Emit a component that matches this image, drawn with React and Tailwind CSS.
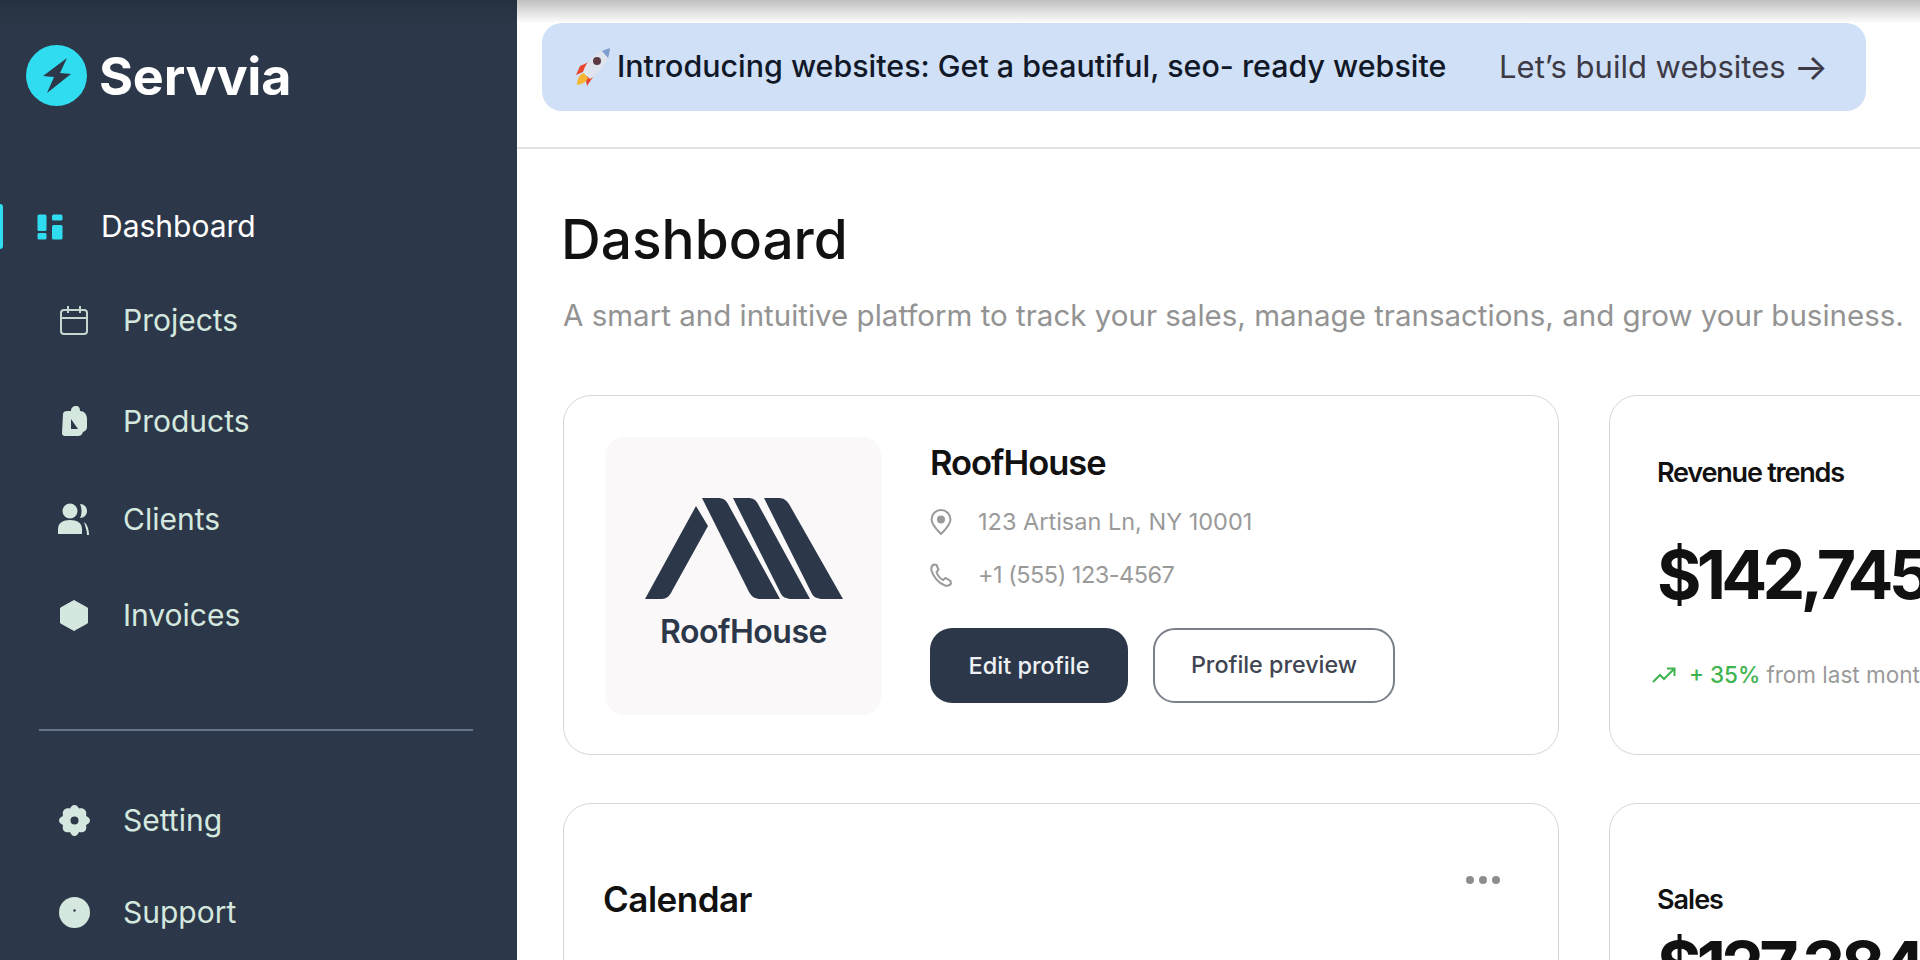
import React from "react";

const navIcon = "#d5e8df";

function Rocket() {
  return (
    <svg width="36" height="40" viewBox="0 0 36 40">
      <path d="M10 24 L1 28 L5 19 L14 15Z" fill="#e8452c" />
      <path d="M18 30 L12 39 L10 29Z" fill="#e8452c" />
      <path d="M2 38 C2 31 5 27 9 26 L13 31 C11 35 8 37 2 38Z" fill="#f7b733" />
      <path d="M8 25 C11 14 21 5 35 1 C34 14 26 25 15 32Z" fill="#dfe5ee" />
      <path d="M27 4 C29 3 32 2 35 1 C35 4 34 8 33 11Z" fill="#7f9fd0" />
      <circle cx="22" cy="14" r="4" fill="#5a3a44" />
    </svg>
  );
}

function Bolt() {
  return (
    <svg width="61" height="61" viewBox="0 0 61 61">
      <circle cx="30.5" cy="30.5" r="30.5" fill="#2fdcf0" />
      <path d="M41 13 L17 31 L28 32 L21 48 L45 29 L34 28Z" fill="#2c3849" />
    </svg>
  );
}

function DashIcon() {
  return (
    <svg width="26" height="26" viewBox="0 0 26 26" fill="#2fdcf0">
      <rect x="0.5" y="0.5" width="9" height="16.5" rx="1.5" />
      <rect x="0.5" y="19" width="9" height="6.5" rx="1.5" />
      <rect x="15" y="0.5" width="10.5" height="6" rx="1.5" />
      <rect x="15" y="11" width="10.5" height="14.5" rx="1.5" />
    </svg>
  );
}

function CalIcon() {
  return (
    <svg width="28" height="30" viewBox="0 0 28 30" fill="none" stroke="#c4d8cf" strokeWidth="2">
      <rect x="1" y="5" width="26" height="24" rx="3" />
      <path d="M1 13h26M8 1v7M20 1v7" />
    </svg>
  );
}

function ProductIcon() {
  return (
    <svg width="28" height="32" viewBox="0 0 28 32">
      <path
        d="M3 9 C3 7 5 6 7 6 L11 6 C11 3 13 1 16 1 C19 1 20 3 20 6 C24 6 27 9 27 14 L27 22 C27 25 25 26 23 27 C22 30 20 31 18 31 L5 31 C3 31 2 30 2 28Z"
        fill={navIcon}
      />
      <path d="M11 14 L18 24 L11 24Z" fill="#2c3849" />
    </svg>
  );
}

function ClientsIcon() {
  return (
    <svg width="32" height="32" viewBox="0 0 32 32" fill={navIcon}>
      <circle cx="12" cy="8" r="7.5" />
      <path d="M22 1 C27 1 29 5 29 8 C29 12 26 15 22 15 C24 11 24 5 22 1Z" />
      <path d="M0 31 L0 26 C0 20 5 17 12 17 C19 17 24 20 24 26 L24 31Z" />
      <path d="M26 19 C29 21 31 26 31 32 L29 32 C29 27 27 23 26 19Z" />
    </svg>
  );
}

function HexIcon() {
  return (
    <svg width="28" height="31" viewBox="0 0 28 31" fill={navIcon}>
      <path d="M14 0.5 L27.5 8 L27.5 23 L14 30.5 L0.5 23 L0.5 8Z" stroke={navIcon} strokeLinejoin="round" />
    </svg>
  );
}

function GearIcon() {
  return (
    <svg width="31" height="31" viewBox="0 0 31 31">
      <path
        d="M15.5 0 C18 0 19 2 20 3.5 C22 3 24.5 3 26 5 C27.5 6.5 27.5 9 27 11 C29 12 31 13 31 15.5 C31 18 29 19 27 20 C27.5 22 27.5 24.5 26 26 C24.5 27.5 22 27.5 20 27 C19 29 18 31 15.5 31 C13 31 12 29 11 27 C9 27.5 6.5 27.5 5 26 C3.5 24.5 3.5 22 4 20 C2 19 0 18 0 15.5 C0 13 2 12 4 11 C3.5 9 3.5 6.5 5 5 C6.5 3 9 3 11 3.5 C12 2 13 0 15.5 0Z"
        fill={navIcon}
      />
      <circle cx="15.5" cy="15.5" r="4" fill="#2c3849" />
    </svg>
  );
}

function SupportIcon() {
  return (
    <svg width="31" height="31" viewBox="0 0 31 31">
      <circle cx="15.5" cy="15.5" r="15.5" fill={navIcon} />
      <circle cx="15.5" cy="13.5" r="1.2" fill="#2c3849" />
    </svg>
  );
}

function RoofLogo() {
  return (
    <svg width="198" height="102" viewBox="0 0 198 102" fill="#2c3849">
      <path d="M51 8 L63 28 L27 93 C25 98 21 101 17 101 L0 101Z" />
      <path d="M57 0 L73 0 C78 0 81 2 83 6 L135 101 L116 101 C110 101 107 99 104 94Z" />
      <path d="M88 0 L103 0 C108 0 111 2 113 6 L165 101 L147 101 C141 101 137 99 135 94Z" />
      <path d="M119 0 L134 0 C139 0 142 3 144 6 L198 101 L178 101 C172 101 168 99 166 94Z" />
    </svg>
  );
}

function NavRow({ icon, label, className }) {
  return (
    <div className={"flex h-[40px] items-center pl-[58px] text-[30px] text-[#d5e8df] " + className}>
      <div className="flex w-[32px] justify-center">{icon}</div>
      <span className="ml-[33px]">{label}</span>
    </div>
  );
}

export default function App() {
  return (
    <div className="flex h-[960px] w-full overflow-hidden bg-white [font-family:Inter,sans-serif]">
      {/* SIDEBAR */}
      <aside className="w-[517px] shrink-0 bg-gradient-to-b from-[#263140] from-0% to-[#2c3849] to-[3%]">
        <div className="flex items-center pl-[26px] pt-[44px]">
          <Bolt />
          <span className="ml-[12px] pt-[2px] text-[52px] font-bold leading-[61px] tracking-[-0.2px] text-white">Servvia</span>
        </div>

        <div className="mt-[97px] flex h-[45px] items-center">
          <div className="h-[45px] w-[3px] rounded-r bg-[#2fdcf0]" />
          <div className="ml-[34px]"><DashIcon /></div>
          <span className="ml-[38px] text-[30px] text-white">Dashboard</span>
        </div>

        <NavRow icon={<CalIcon />} label="Projects" className="mt-[51px]" />
        <NavRow icon={<ProductIcon />} label="Products" className="mt-[61px]" />
        <NavRow icon={<ClientsIcon />} label="Clients" className="mt-[58px]" />
        <NavRow icon={<HexIcon />} label="Invoices" className="mt-[56px]" />

        <div className="ml-[39px] mt-[94px] h-[2px] w-[434px] bg-[#64748b]" />

        <NavRow icon={<GearIcon />} label="Setting" className="mt-[69px]" />
        <NavRow icon={<SupportIcon />} label="Support" className="mt-[52px]" />
      </aside>

      {/* MAIN */}
      <main className="min-w-0 flex-1 overflow-hidden">
        <div className="h-[149px] border-b-2 border-[#e2e2e2] bg-gradient-to-b from-[#c0c0c0] to-white to-[16%] pl-[25px] pr-[54px] pt-[23px]">
          <div className="flex h-[88px] items-center justify-between rounded-[20px] bg-[#cfe0f7] pl-[33px] pr-[38px]">
            <div className="flex items-center gap-[6px]">
              <Rocket />
              <span className="text-[30.4px] font-medium text-[#111827]">Introducing websites: Get a beautiful, seo- ready website</span>
            </div>
            <span className="flex items-center text-[31px] text-[#3d3a45]">
              Let’s build websites
              <span className="ml-[8px] text-[36px] leading-[40px]">→</span>
            </span>
          </div>
        </div>

        <div className="pl-[46px]">
          <h1 className="ml-[-2px] mt-[57px] text-[55px] font-medium leading-[66px] text-[#111]">Dashboard</h1>
          <p className="mt-[25px] whitespace-nowrap text-[29.5px] leading-[36px] text-[#939393]">
            A smart and intuitive platform to track your sales, manage transactions, and grow your business.
          </p>

          <div className="mt-[62px] flex gap-[50px]">
            {/* PROFILE CARD */}
            <div className="flex h-[360px] w-[996px] shrink-0 rounded-[28px] border border-[#d6d6d6] p-[41px]">
              <div className="flex h-[278px] w-[277px] flex-col items-center rounded-[20px] bg-[#faf8f9] pt-[61px]">
                <RoofLogo />
                <span className="mt-[14px] text-[32px] font-semibold leading-[36px] tracking-[-0.5px] text-[#2c3849]">RoofHouse</span>
              </div>
              <div className="ml-[48px] flex flex-col">
                <h2 className="mt-[6px] text-[34.5px] font-semibold leading-[40px] tracking-[-1px] text-[#111]">RoofHouse</h2>
                <div className="mt-[24px] flex items-center text-[23.5px] leading-[30px] text-[#9a9a9a]">
                  <svg width="22" height="26" viewBox="0 0 22 26" fill="none" stroke="#9a9a9a" strokeWidth="2">
                    <path d="M11 25 C6 20 1.5 15 1.5 10.5 A9.5 9.5 0 0 1 20.5 10.5 C20.5 15 16 20 11 25Z" />
                    <circle cx="11" cy="10.5" r="4" fill="#9a9a9a" stroke="none" />
                  </svg>
                  <span className="ml-[26px]">123 Artisan Ln, NY 10001</span>
                </div>
                <div className="mt-[23px] flex items-center text-[23.5px] leading-[30px] tracking-[-0.5px] text-[#9a9a9a]">
                  <svg width="22" height="24" viewBox="0 0 22 24" fill="none" stroke="#9a9a9a" strokeWidth="2">
                    <path d="M4 1.5 C1.5 2.5 1 5 1.5 7.5 C3 13 8 20 15 22.5 C17.5 23 20 22.5 21 20.5 L20.5 18 L15.5 15 L13 17 C10 15.5 7.5 12 6.5 9 L8.5 6.5 L6.5 2Z" />
                  </svg>
                  <span className="ml-[26px]">+1 (555) 123-4567</span>
                </div>
                <div className="mt-[38px] flex gap-[25px]">
                  <button className="flex h-[75px] w-[198px] items-center justify-center rounded-[22px] bg-[#2c3849] text-[23.5px] font-medium text-[#eef1f4]">Edit profile</button>
                  <button className="flex h-[75px] w-[242px] items-center justify-center rounded-[22px] border-2 border-[#7a808a] text-[23.3px] font-medium text-[#3f4652]">Profile preview</button>
                </div>
              </div>
            </div>

            {/* REVENUE CARD */}
            <div className="h-[360px] w-[600px] shrink-0 rounded-[28px] border border-[#d6d6d6] pl-[47px] pt-[60px]">
              <h3 className="text-[27px] font-semibold leading-[34px] tracking-[-1.2px] text-[#111]">Revenue trends</h3>
              <div className="mt-[44px] text-[68px] font-bold leading-[80px] tracking-[-4.8px] text-[#111]">$142,745</div>
              <div className="ml-[-5px] mt-[46px] flex items-center whitespace-nowrap text-[22.5px] leading-[30px]">
                <svg width="24" height="16" viewBox="0 0 24 16" fill="none" stroke="#3fb34f" strokeWidth="2">
                  <path d="M1 15 L8 8 L12 12 L22 2M15 1.5 H22.5 V9" />
                </svg>
                <span className="ml-[13px] font-medium text-[#3fb34f]">+ 35%</span>
                <span className="ml-[6px] text-[#9a9a9a]">from last month</span>
              </div>
            </div>
          </div>

          <div className="mt-[48px] flex gap-[50px]">
            {/* CALENDAR CARD */}
            <div className="h-[300px] w-[996px] shrink-0 rounded-[28px] border border-[#d6d6d6] pl-[39px] pr-[58px] pt-[63px]">
              <div className="flex items-start justify-between">
                <h3 className="mt-[12px] text-[35px] font-semibold leading-[40px] tracking-[-0.5px] text-[#111]">Calendar</h3>
                <div className="flex gap-[5px] pt-[9px]">
                  <div className="h-[8px] w-[8px] rounded-full bg-[#8d8d8d]" />
                  <div className="h-[8px] w-[8px] rounded-full bg-[#8d8d8d]" />
                  <div className="h-[8px] w-[8px] rounded-full bg-[#8d8d8d]" />
                </div>
              </div>
            </div>

            {/* SALES CARD */}
            <div className="h-[300px] w-[600px] shrink-0 rounded-[28px] border border-[#d6d6d6] pl-[47px] pt-[79px]">
              <h3 className="text-[27px] font-semibold leading-[34px] tracking-[-1px] text-[#111]">Sales</h3>
              <div className="mt-[8px] text-[68px] font-bold leading-[80px] tracking-[-4.8px] text-[#111]">$127,384</div>
            </div>
          </div>
        </div>
      </main>
    </div>
  );
}
